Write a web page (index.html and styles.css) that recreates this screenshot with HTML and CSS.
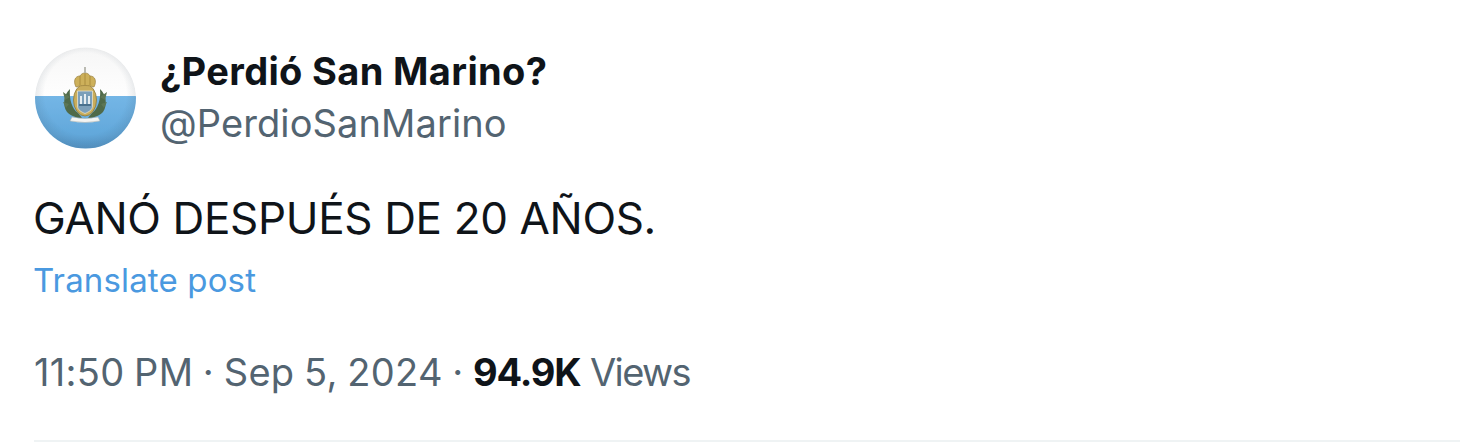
FILE: index.html
```html
<!DOCTYPE html>
<html lang="en">
<head>
    <meta charset="UTF-8">
    <title>Post</title>
    <link rel="stylesheet" href="styles.css">
</head>
<body>
    <div class="post">
        <div class="author">
            <svg class="avatar" viewBox="0 0 104 106" width="104" height="106">
                <defs>
                    <clipPath id="disc"><circle cx="52.5" cy="53" r="50.5"/></clipPath>
                    <linearGradient id="white" x1="0" y1="0" x2="0" y2="1">
                        <stop offset="0" stop-color="#f6f6f6"/>
                        <stop offset="1" stop-color="#fefefe"/>
                    </linearGradient>
                    <linearGradient id="blue" x1="0" y1="0" x2="0" y2="1">
                        <stop offset="0" stop-color="#74b6e6"/>
                        <stop offset="0.7" stop-color="#62a8db"/>
                        <stop offset="1" stop-color="#5598cb"/>
                    </linearGradient>
                    <radialGradient id="shade" cx="0.5" cy="0.46" r="0.54">
                        <stop offset="0.75" stop-color="#33475a" stop-opacity="0"/>
                        <stop offset="1" stop-color="#33475a" stop-opacity="0.16"/>
                    </radialGradient>
                    <filter id="soft"><feGaussianBlur stdDeviation="0.6"/></filter>
                </defs>
                <g filter="url(#soft)">
                    <g clip-path="url(#disc)">
                        <rect width="104" height="51" fill="url(#white)"/>
                        <rect y="51" width="104" height="55" fill="url(#blue)"/>
                        <circle cx="52.5" cy="53" r="50.5" fill="url(#shade)"/>
                    </g>
                    <!-- coat of arms -->
                    <path d="M37 44c-6 5-8 16-3 23 4 4 10 6 15 6l-4-5c-6-4-9-14-8-24zM67 44c6 5 8 16 3 23-4 4-10 6-15 6l4-5c6-4 9-14 8-24z" fill="#4f6a4a"/>
                    <path d="M30 47l7 5-5 3zM74 47l-7 5 5 3zM30 57l6 2-3 4zM74 57l-6 2 3 4z" fill="#5d7654"/>
                    <ellipse cx="52" cy="55" rx="11.5" ry="16" fill="#c9ad5c" stroke="#8e7a3a" stroke-width="0.8"/>
                    <path d="M44.500 46h15v15c0 4-4 6-7.500 7.500-3.500-1.500-7.500-3.500-7.500-7.500z" fill="#7c9fb9" stroke="#e8e2cb" stroke-width="0.8"/>
                    <path d="M47 59v-8h2v8zM51 59v-10h2v10zM55 59v-8h2v8z" fill="#e6edf1"/>
                    <path d="M46 59h12v2H46z" fill="#49708d"/>
                    <path d="M43 42c-3-6-1-11 4-11 1-2 3-3 5-3s4 1 5 3c5 0 7 5 4 11-5-2-13-2-18 0z" fill="#cdb05a" stroke="#9a7f3e" stroke-width="0.7"/>
                    <path d="M52 22v6" stroke="#b3b3aa" stroke-width="1.8"/>
                    <path d="M47 31v9M52 29v11M57 31v9" stroke="#a88a3d" stroke-width="0.9"/>
                    <path d="M39 72q13 3 26 0l2 4q-15 3-30 0z" fill="#f3f4f2" stroke="#a7aca8" stroke-width="0.5"/>
                </g>
            </svg>
            <div class="names">
                <div class="name">¿Perdió San Marino?</div>
                <div class="handle">@PerdioSanMarino</div>
            </div>
        </div>
        <div class="text">GANÓ DESPUÉS DE 20 AÑOS.</div>
        <a class="translate">Translate post</a>
        <div class="meta">11:50 PM · Sep 5, 2024 · <b>94.9K</b> <span class="views">Views</span></div>
        <div class="rule"></div>
    </div>
</body>
</html>
```

FILE: styles.css
```css
body {
    margin: 0;
    background: #fff;
    font-family: Inter, "Liberation Sans", sans-serif;
    color: #0f1419;
}

.post {
    padding: 45px 0 0 33px;
}
.author {
    display: flex;
    align-items: center;
    gap: 23px;
}
.avatar {
    display: block;
    flex: none;
}
.names {
    margin-top: -3px;
}
.name {
    font-size: 38px;
    line-height: 52px;
    font-weight: 700;
    letter-spacing: 0.35px;
}
.handle {
    font-size: 38px;
    line-height: 52px;
    color: #536471;
    letter-spacing: 0.1px;
}
.text {
    margin-top: 39px;
    font-size: 44px;
    line-height: 56px;
    letter-spacing: -0.35px;
}
.translate {
    display: block;
    margin-top: 10px;
    font-size: 33px;
    line-height: 48px;
    color: #4a99e0;
    letter-spacing: 0.15px;
}
.meta {
    margin-top: 42px;
    margin-left: 1px;
    font-size: 38px;
    line-height: 52px;
    color: #536471;
    word-spacing: -1.5px;
    letter-spacing: 0.33px;
}
.meta b {
    color: #0f1419;
    letter-spacing: -1.2px;
}
.views {
    letter-spacing: -1.6px;
}
.rule {
    margin-top: 42px;
    margin-left: 1px;
    height: 2px;
    background: #eff3f4;
}
```
